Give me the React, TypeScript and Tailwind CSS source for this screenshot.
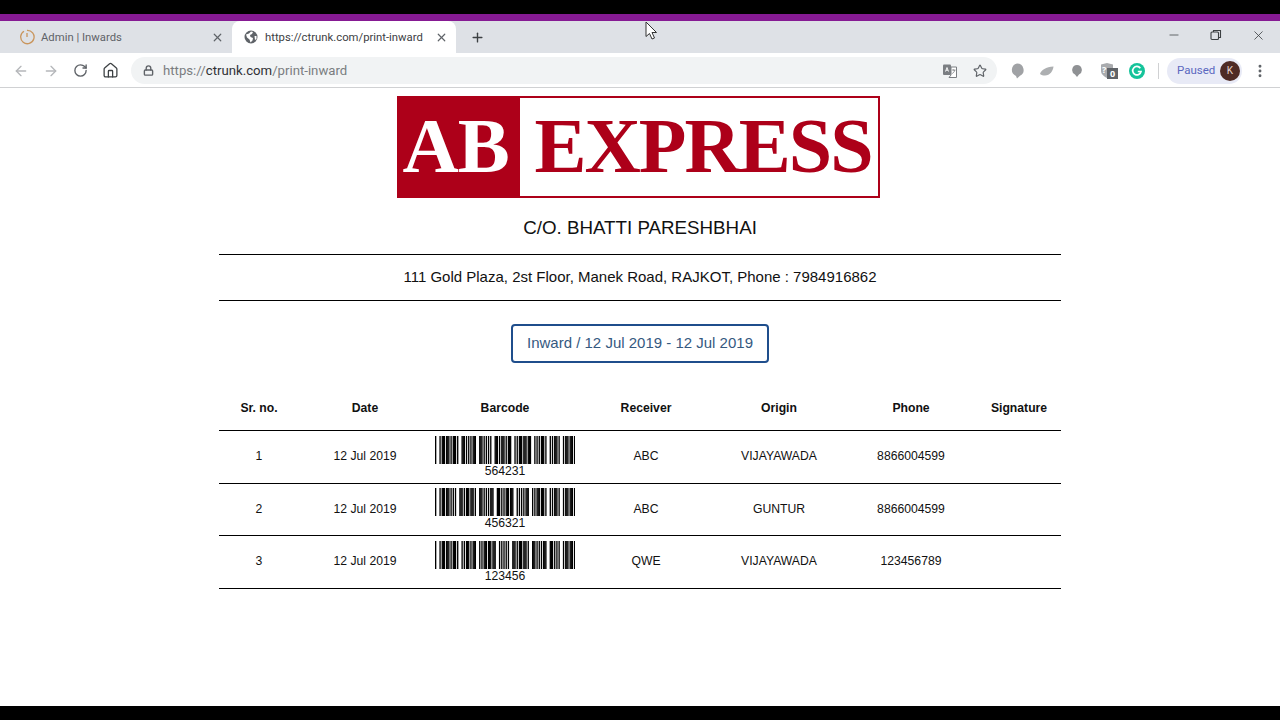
import { ArrowLeft, ArrowRight, RotateCw, Home, Lock, Star, X, Plus, Minus, MoreVertical } from "lucide-react"

const CODE39: Record<string, string> = {
  "0": "101001101101",
  "1": "110100101011",
  "2": "101100101011",
  "3": "110110010101",
  "4": "101001101011",
  "5": "110100110101",
  "6": "101100110101",
  "7": "101001011011",
  "8": "110100101101",
  "9": "101100101101",
  "*": "100101101101",
}

function Barcode({ value }: { value: string }) {
  // wide elements are three modules, not two
  const bits = `*${value}*`
    .split("")
    .map((c) => CODE39[c])
    .join("0")
    .replace(/11/g, "111")
    .replace(/00/g, "000")

  return (
    <svg width="140" height="28" viewBox={`0 0 ${bits.length} 28`} preserveAspectRatio="none" className="block mx-auto">
      {bits.split("").map((b, i) => (b === "1" ? <rect key={i} x={i} y="0" width="1.2" height="28" fill="#000" /> : null))}
    </svg>
  )
}

const rows = [
  { no: 1, code: "564231", receiver: "ABC", origin: "VIJAYAWADA", phone: "8866004599", height: "h-[53px]" },
  { no: 2, code: "456321", receiver: "ABC", origin: "GUNTUR", phone: "8866004599", height: "h-[52px]" },
  { no: 3, code: "123456", receiver: "QWE", origin: "VIJAYAWADA", phone: "123456789", height: "h-[53px]" },
]

function LoaderIcon() {
  return (
    <svg width="16" height="16" viewBox="0 0 16 16" fill="none" stroke="#c9955c" strokeWidth="1.3">
      <path d="M5 2.2A6.7 6.7 0 1 0 8 1.3" />
      <path d="M8 4v4" stroke="#c9955c" />
    </svg>
  )
}

function GlobeIcon() {
  return (
    <svg width="14" height="14" viewBox="0 0 14 14">
      <circle cx="7" cy="7" r="6.5" fill="#5f6368" />
      <path d="M2 4.5 5 3.5 7 1.5 9 2 8 4 6 5 6.5 7 9 8 8.5 10.5 6.5 12.5 5.5 9.5 3 7.5ZM10.5 6 12.5 6 12.5 9 11 10Z" fill="#fff" />
    </svg>
  )
}

function TranslateIcon() {
  return (
    <svg width="14" height="14" viewBox="0 0 14 14">
      <rect x="0" y="0.5" width="8" height="10.5" rx="1" fill="#7b7e82" />
      <path d="M8 3h5.5v10.5H6l2-2.5Z" fill="#fff" stroke="#7b7e82" />
      <path d="M2.5 7.5 4 3.5l1.5 4M3 6.2h2" stroke="#fff" strokeWidth="0.9" fill="none" />
      <path d="M9 6h3.5M10.5 5.5v1M11.8 6c-.3 1.6-1.2 2.8-2.6 3.5" stroke="#7b7e82" strokeWidth="0.8" fill="none" />
    </svg>
  )
}

function Extensions() {
  return (
    <div className="flex items-center ml-[5px]">
      <div className="w-[30px] flex justify-center">
        <svg width="14" height="16" viewBox="0 0 14 16"><path d="M7 .5a6.5 6.5 0 0 1 3 12.3L7 15.5l-1-2.6A6.5 6.5 0 0 1 7 .5Z" fill="#a0a2a5" /></svg>
      </div>
      <div className="w-[30px] flex justify-center">
        <svg width="14" height="10" viewBox="0 0 14 10"><path d="M0 8C1 4 6 1 13.5.5 13 5 10 9.500 5 9.500 3 9.500 1.500 9 0 8Z" fill="#adafb1" /></svg>
      </div>
      <div className="w-[30px] flex justify-center">
        <svg width="10" height="12" viewBox="0 0 10 12"><path d="M5 0a5 5 0 0 1 2 9.500L5 12 3 9.500A5 5 0 0 1 5 0Z" fill="#8f9194" /></svg>
      </div>
      <div className="w-[30px] flex justify-center relative">
        <svg width="14" height="15" viewBox="0 0 14 15"><path d="M1 1.500 7 0l6 1.500V8c0 3-3 5.500-6 7-3-1.500-6-4-6-7Z" fill="#a9abae" /></svg>
        <span className="absolute left-[10px] top-[0px] text-white text-[9px] font-bold leading-[14px] font-['Open_Sans',sans-serif]">?</span>
        <span className="absolute left-[15px] top-[5px] text-white text-[9px] font-bold leading-[11px] w-[11px] text-center bg-[#5f6368] font-['Open_Sans',sans-serif]">0</span>
      </div>
      <div className="w-[30px] flex justify-center">
        <svg width="16" height="16" viewBox="0 0 16 16">
          <circle cx="8" cy="8" r="8" fill="#15c39a" />
          <path d="M11.300 5.200A4.200 4.200 0 1 0 12 8.500H8.800" stroke="#fff" strokeWidth="1.700" fill="none" />
        </svg>
      </div>
    </div>
  )
}

export default function App() {
  return (
    <div className="h-screen flex flex-col overflow-hidden bg-white font-['Liberation_Sans',Arial,sans-serif] text-black">
      <div className="h-[14px] bg-black" />
      <div className="h-[7px] bg-[#861a93]" />

      {/* Tabs */}
      <div className="h-[32px] bg-[#dee1e6] flex items-stretch font-['Roboto',sans-serif] text-[11.300px] relative whitespace-nowrap">
        <div className="w-[232px] flex items-center pl-[19px] pr-[8px]">
          <LoaderIcon />
          <span className="ml-[6px] flex-1 text-[#5f6368] pt-[2px]">Admin | Inwards</span>
          <X size={13} strokeWidth={2.2} className="text-[#5f6368]" />
        </div>
        <div className="w-[224px] bg-white rounded-t-lg flex items-center pl-[12px] pr-[8px]">
          <GlobeIcon />
          <span className="ml-[7px] flex-1 text-[#3c4043] pt-[2px]">https://ctrunk.com/print-inward</span>
          <X size={13} strokeWidth={2.2} className="text-[#5f6368]" />
        </div>
        <div className="ml-[14px] flex items-center">
          <Plus size={15} strokeWidth={2.2} className="text-[#3c4043]" />
        </div>
        <div className="flex-1 flex items-center justify-end pr-[14px] gap-[29px] pb-[4px]">
          <Minus size={14} strokeWidth={1.300} className="text-[#3c4043]" />
          <svg width="12" height="12" viewBox="0 0 12 12" fill="none" stroke="#3c4043" strokeWidth="1.100">
            <rect x="1" y="3" width="7.500" height="7.500" rx="1" />
            <path d="M3.500 3V1.500h7V8.500H8.500" />
          </svg>
          <X size={15} strokeWidth={1.300} className="text-[#3c4043]" />
        </div>
      </div>

      {/* Toolbar */}
      <div className="h-[35px] shrink-0 bg-white border-b border-[#d0d1d3] flex items-center pl-[13px] pr-[12px] pt-[1px]">
        <ArrowLeft size={16} strokeWidth={2} className="text-[#b5b7ba]" />
        <ArrowRight size={16} strokeWidth={2} className="text-[#b5b7ba] ml-[14px]" />
        <RotateCw size={15} strokeWidth={2.200} className="text-[#5f6368] ml-[14px]" />
        <Home size={17} strokeWidth={1.800} className="text-[#3c4043] ml-[14px]" />
        <div className="ml-[12px] w-[866px] h-[27px] rounded-full bg-[#f1f3f4] flex items-center pl-[12px] pr-[10px] font-['Roboto',sans-serif] text-[13.200px]">
          <Lock size={11} strokeWidth={3} className="text-[#5f6368]" />
          <span className="ml-[9px] flex-1 text-[#7a7d80]">
            https://<span className="text-[#303134]">ctrunk.com</span>/print-inward
          </span>
          <TranslateIcon />
          <Star size={14} strokeWidth={2} className="text-[#5f6368] ml-[16px]" />
        </div>
        <Extensions />
        <div className="w-px h-[16px] bg-[#d0d1d3] ml-[6px]" />
        <div className="ml-[8px] w-[75px] h-[26px] rounded-full bg-[#e8eaf6] flex items-center pl-[10px] font-['Roboto',sans-serif] text-[11.500px] text-[#5a67c0] relative">
          Paused
          <span className="absolute left-[53px] top-[3px] w-[20px] h-[20px] rounded-full bg-[#4e2a25] text-[#e8d5cf] text-[10px] flex items-center justify-center">K</span>
        </div>
        <MoreVertical size={16} strokeWidth={2.400} className="text-[#5f6368] ml-[10px]" />
      </div>

      {/* Page */}
      <div className="flex-1 pt-2 flex flex-col items-center">
        <div className="w-[483px] h-[102px] mr-[4px] border-2 border-[#ad0019] flex items-stretch font-['Liberation_Serif',serif] font-bold leading-none whitespace-nowrap">
          <div className="w-[121px] bg-[#ad0019] text-white text-[78px] tracking-[-1px] flex items-center pl-[4px] pb-[3px]">AB</div>
          <div className="flex-1 text-[#ad0019] text-[78px] tracking-[-2px] flex items-center pl-[15px] pb-[3px]">EXPRESS</div>
        </div>

        <div className="w-[842px] text-center">
          <h1 className="text-[18.750px] leading-[60px] h-[57px] text-[#111] border-b border-black">C/O. BHATTI PARESHBHAI</h1>
          <p className="text-[15px] leading-[43px] h-[46px] text-[#111] border-b border-black">111 Gold Plaza, 2st Floor, Manek Road, RAJKOT, Phone : 7984916862</p>

          <div className="mt-[23px] h-[39px] flex justify-center">
            <div className="w-[258px] h-[39px] border-2 border-[#1f4e8c] rounded-[4px] text-[15px] leading-[33px] text-[#35597f]">
              Inward / 12 Jul 2019 - 12 Jul 2019
            </div>
          </div>

          <table className="mt-[24px] w-[842px] table-fixed border-collapse text-[12.200px] text-[#111]">
            <colgroup>
              <col className="w-[80px]" />
              <col className="w-[132px]" />
              <col className="w-[148px]" />
              <col className="w-[134px]" />
              <col className="w-[132px]" />
              <col className="w-[132px]" />
              <col className="w-[84px]" />
            </colgroup>
            <thead>
              <tr className="h-[43px] border-b border-black font-bold">
                <th>Sr. no.</th>
                <th>Date</th>
                <th>Barcode</th>
                <th>Receiver</th>
                <th>Origin</th>
                <th>Phone</th>
                <th>Signature</th>
              </tr>
            </thead>
            <tbody>
              {rows.map((r) => (
                <tr key={r.no} className={`${r.height} border-b border-black`}>
                  <td>{r.no}</td>
                  <td>12 Jul 2019</td>
                  <td className="leading-[14px]">
                    <Barcode value={r.code} />
                    {r.code}
                  </td>
                  <td>{r.receiver}</td>
                  <td>{r.origin}</td>
                  <td>{r.phone}</td>
                  <td></td>
                </tr>
              ))}
            </tbody>
          </table>
        </div>
      </div>
      <div className="h-[14px] shrink-0 bg-black" />

      {/* Mouse cursor */}
      <svg width="13" height="19" viewBox="0 0 13 19" className="absolute left-[645px] top-[21px]">
        <path d="M1 1v14.500l3.500-3 2.500 5.500 2.500-1-2.500-5.500h4.500Z" fill="#fff" stroke="#333" strokeWidth="1" />
      </svg>
    </div>
  )
}
